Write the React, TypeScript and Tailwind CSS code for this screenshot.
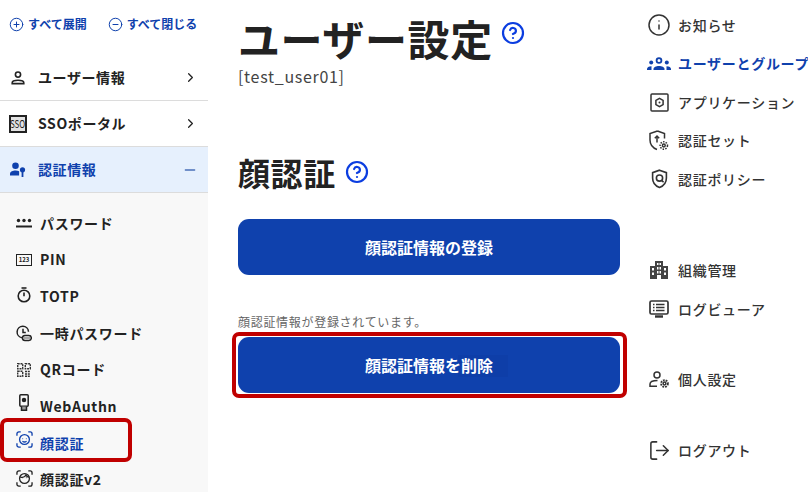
import React from 'react';
import { ChevronRight, CirclePlus, CircleMinus, CircleHelp, Info, LogOut, Minus } from 'lucide-react';

const font = { fontFamily: '"Noto Sans CJK JP", "Noto Sans", sans-serif' };

const PersonIcon = () => (
    <svg width="14" height="14" viewBox="0 0 14 14" fill="none" stroke="#222" strokeWidth="1.6">
        <circle cx="7" cy="3.6" r="2.6" />
        <path d="M1.2 12.6v-.9c0-1.4 2.9-2.4 5.8-2.4s5.8 1 5.8 2.4v.9z" />
    </svg>
);

const SsoIcon = () => (
    <div className="flex h-[18px] w-[18px] items-center justify-center overflow-hidden border-2 border-[#222] bg-[#e2e2e2]">
        <span className="scale-x-[0.72] text-[11px] leading-none text-[#222]">SSO</span>
    </div>
);

const KeyUserIcon = () => (
    <svg width="16" height="15" viewBox="0 0 16 15" fill="#0f41ad">
        <circle cx="5.5" cy="3.8" r="3.3" />
        <path d="M0 13.5v-1.9C0 9.6 3 8.4 5.5 8.4c1.3 0 2.6.3 3.6.9v4.2z" />
        <circle cx="12.5" cy="7.8" r="2.6" />
        <rect x="11.6" y="9" width="1.8" height="6" />
    </svg>
);

const DotsIcon = () => (
    <svg width="16" height="11" viewBox="0 0 16 11" fill="#222">
        <circle cx="2.5" cy="2.5" r="1.7" />
        <circle cx="8" cy="2.5" r="1.7" />
        <circle cx="13.5" cy="2.5" r="1.7" />
        <rect x="0" y="7.5" width="16" height="2" />
    </svg>
);

const PinIcon = () => (
    <div className="flex h-[12px] w-[16px] items-center justify-center border-[1.5px] border-[#222] text-[6px] font-bold leading-none text-[#222]">
        123
    </div>
);

const TimerIcon = () => (
    <svg width="14" height="16" viewBox="0 0 14 16" fill="none" stroke="#222" strokeWidth="1.6">
        <path d="M4.5 1h5" />
        <circle cx="7" cy="9" r="5.8" />
        <path d="M7 5.5v3.8" />
    </svg>
);

const TempIcon = () => (
    <svg width="16" height="17" viewBox="0 0 16 17" fill="none" stroke="#222" strokeWidth="1.5">
        <path d="M6 12.7a5.7 5.7 0 1 1 6.5-6" />
        <path d="M7 3.8v3.7h2.8" />
        <rect x="6.5" y="10.5" width="8.8" height="5" rx="2.5" />
        <path d="M8.5 13h5" strokeDasharray="1 1" />
    </svg>
);

const QrIcon = () => (
    <svg width="14" height="14" viewBox="0 0 14 14" fill="none" stroke="#333" strokeWidth="1.4" strokeDasharray="2 .8">
        <rect x=".7" y=".7" width="5" height="5" />
        <rect x="8.3" y=".7" width="5" height="5" />
        <rect x=".7" y="8.3" width="5" height="5" />
        <path d="M8 8.5h5.5M8 11h5.5M8 13.300h5.5" />
    </svg>
);

const UsbIcon = () => (
    <svg width="10" height="17" viewBox="0 0 10 17" fill="none" stroke="#222" strokeWidth="1.5">
        <rect x=".8" y=".8" width="8.4" height="11.5" rx="1" />
        <circle cx="5" cy="6" r="1.5" fill="#222" />
        <path d="M2.5 12.5v3.7h5v-3.7" fill="#999" />
    </svg>
);

const FaceIcon = ({ color, v2 }: { color: string; v2?: boolean }) => (
    <svg width="17" height="17" viewBox="0 0 18 18" fill="none" stroke={color} strokeWidth="1.4">
        <path d="M1 5V3a2 2 0 0 1 2-2h2M13 1h2a2 2 0 0 1 2 2v2M17 13v2a2 2 0 0 1-2 2h-2M5 17H3a2 2 0 0 1-2-2v-2" />
        <circle cx="9" cy="9" r="5.2" />
        {v2 ? (
            <path d="M4.500 7.5c2 .5 5 0 6-2.200 .6 1.500 1.500 2.200 3 2.400" />
        ) : (
            <path d="M6.800 10.800c1.200.9 3.200.9 4.400 0" />
        )}
        <path d="M6.900 8h.6M10.500 8h.6" />
    </svg>
);

const ParentRow = ({ icon, label, active }: { icon: React.ReactNode; label: string; active?: boolean }) => (
    <div
        className={`flex h-[46px] shrink-0 items-center border-b-[1.5px] border-[#dcdcdc] pr-[10px] ${
            active ? 'bg-[#e6f0fd] text-[#0f41ad]' : 'text-[#222]'
        }`}
    >
        <div className="mr-[2px] flex w-[36px] shrink-0 justify-center">{icon}</div>
        <span className="flex-1 text-[14px] font-bold tracking-[0.6px]">{label}</span>
        {active ? (
            <Minus size={16} strokeWidth={2} color="#4a6fb8" />
        ) : (
            <ChevronRight size={15} strokeWidth={2} color="#222" />
        )}
    </div>
);

const subItems: { icon: React.ReactNode; label: string; active?: boolean; lift?: string }[] = [
    { icon: <DotsIcon />, label: 'パスワード' },
    { icon: <PinIcon />, label: 'PIN' },
    { icon: <TimerIcon />, label: 'TOTP', lift: 'mt-[-2px]' },
    { icon: <TempIcon />, label: '一時パスワード' },
    { icon: <QrIcon />, label: 'QRコード' },
    { icon: <UsbIcon />, label: 'WebAuthn', lift: 'mt-[-8px]' },
    { icon: <FaceIcon color="#0f41ad" />, label: '顔認証', active: true, lift: 'mt-[-7px]' },
    { icon: <FaceIcon color="#222" v2 />, label: '顔認証v2', lift: 'mt-[-2px]' },
];

const HelpIcon = ({ size }: { size: number }) => <CircleHelp size={size} strokeWidth={2.2} color="#0b3de0" />;

const AppIcon = () => (
    <svg width="19" height="19" viewBox="0 0 19 19" fill="none" stroke="#333" strokeWidth="1.5">
        <rect x="1" y="1" width="17" height="17" rx="1" />
        <path d="M9.500 5.300l3.600 2.100v4.200l-3.600 2.100-3.600-2.100V7.400z" />
        <circle cx="9.500" cy="9.500" r="1" fill="#333" stroke="none" />
    </svg>
);

const UsersIcon = () => (
    <svg width="24" height="14" viewBox="0 0 24 14" fill="#0f41ad">
        <circle cx="12" cy="3.5" r="2.4" fill="none" stroke="#0f41ad" strokeWidth="1.8" />
        <path d="M6.5 13v-1c0-2 2.700-3 5.500-3s5.500 1 5.500 3v1z" />
        <circle cx="4.200" cy="5.5" r="2" />
        <path d="M0 13v-1c0-1.700 1.600-2.800 4.500-2.800V13z" />
        <circle cx="19.800" cy="5.5" r="2" />
        <path d="M24 13v-1c0-1.700-1.600-2.800-4.500-2.800V13z" />
    </svg>
);

const ShieldGearIcon = () => (
    <svg width="20" height="21" viewBox="0 0 20 21" fill="none" stroke="#333" strokeWidth="1.5">
        <path d="M8.500 1l7 2.600v5M8 19.500C4 18 1 14.500 1 10V3.600L8.500 1" />
        <path d="M8 12.500V6" />
        <path d="M5.800 8.300L8 6.100l2.200 2.200" />
        <circle cx="14.800" cy="15.5" r="1.4" />
        <circle cx="14.800" cy="15.5" r="3.7" strokeDasharray="1.5 1.2" />
    </svg>
);

const ShieldSearchIcon = () => (
    <svg width="17" height="20" viewBox="0 0 18 21" fill="none" stroke="#333" strokeWidth="1.7">
        <path d="M9 1.200l7.300 2.600v5.700c0 4.800-3 8.500-7.300 10-4.300-1.500-7.300-5.200-7.300-10V3.800z" />
        <circle cx="9" cy="9.5" r="3.3" />
        <path d="M11.300 12l2 2" />
    </svg>
);

const BuildingIcon = () => (
    <svg width="18" height="18" viewBox="0 0 18 18" fill="#444">
        <path
            d="M5 0h8v5h5v13h-7v-4H7v4H0V5h5zM7 2v2h1.500V2zm2.500 0v2H11V2zM7 6v2.500h1.500V6zm2.500 0v2.500H11V6zM2 7v2.500h2V7zm12 0v2.500h2V7zM7 10v2.500h1.500V10zm2.500 0v2.500H11V10zM2 11.500V14h2v-2.500zm12 0V14h2v-2.500z"
            fillRule="evenodd"
        />
    </svg>
);

const LogViewIcon = () => (
    <svg width="20" height="18" viewBox="0 0 20 18" fill="none" stroke="#333" strokeWidth="1.7">
        <rect x="1" y="1" width="18" height="13" rx="1.5" />
        <path d="M7 4.500h8.500M7 7.500h8.500M7 10.500h8.500M4 4.500h1.500M4 7.500h1.500M4 10.500h1.500" />
        <path d="M6 16.500h8" strokeWidth="2.4" />
    </svg>
);

const UserGearIcon = () => (
    <svg width="20" height="17" viewBox="0 0 20 17" fill="none" stroke="#333" strokeWidth="1.5">
        <circle cx="8" cy="4" r="3" />
        <path d="M8.500 9.500c-4 0-7.500 1-7.500 3.500v2.300h7" />
        <circle cx="15.5" cy="12.5" r="1.4" />
        <circle cx="15.5" cy="12.5" r="3.4" strokeDasharray="1.8 1" strokeWidth="1.8" />
    </svg>
);

const NavRow = ({
    icon,
    label,
    active,
    className = '',
}: {
    icon: React.ReactNode;
    label: string;
    active?: boolean;
    className?: string;
}) => (
    <div className={`flex h-[24px] shrink-0 items-center ${className}`}>
        <div className="flex w-[38px] shrink-0 justify-center">{icon}</div>
        <span
            className={`whitespace-nowrap text-[14px] tracking-[0.7px] ${
                active ? 'font-bold text-[#0f41ad]' : 'font-medium text-[#333]'
            }`}
        >
            {label}
        </span>
    </div>
);

export default function App() {
    return (
        <div className="flex h-[492px] w-[808px] overflow-hidden bg-white" style={font}>
            {/* Left menu */}
            <aside className="relative flex w-[208px] shrink-0 flex-col">
                <div className="flex h-[55px] shrink-0 items-start gap-[21px] pl-[9px] pt-[15px] text-[12px] font-bold text-[#0f41ad]">
                    <span className="flex items-center gap-[4px]">
                        <CirclePlus size={15} strokeWidth={1.6} />
                        すべて展開
                    </span>
                    <span className="flex items-center gap-[4px]">
                        <CircleMinus size={15} strokeWidth={1.6} />
                        すべて閉じる
                    </span>
                </div>
                <ParentRow icon={<PersonIcon />} label="ユーザー情報" />
                <ParentRow icon={<SsoIcon />} label="SSOポータル" />
                <ParentRow icon={<KeyUserIcon />} label="認証情報" active />
                <div className="flex flex-1 flex-col gap-[0.65px] bg-[#f8f8f8] pt-[12.2px]">
                    {subItems.map((item) => (
                        <div key={item.label} className="flex h-[36px] shrink-0 items-center">
                            <div className={`flex w-[40px] shrink-0 justify-center pl-[10px] pr-[2px] ${item.lift ?? ''}`}>
                                {item.icon}
                            </div>
                            <span
                                className={`text-[14px] font-bold tracking-[0.7px] ${
                                    item.active ? 'text-[#0f41ad]' : 'text-[#222]'
                                }`}
                            >
                                {item.label}
                            </span>
                        </div>
                    ))}
                </div>
                {/* red annotation */}
                <div className="absolute left-0 top-[418px] h-[44px] w-[132px] rounded-[7px] border-[4px] border-[#c00000]" />
            </aside>

            {/* Main */}
            <main className="relative flex w-[432px] shrink-0 flex-col pl-[30px] pr-[20px]">
                <div className="mt-[10px] flex items-center gap-[8px]">
                    <h1 className="text-[42px] font-bold leading-[56px] tracking-[0.6px] text-[#222]">ユーザー設定</h1>
                    <div className="mb-[10px]">
                        <HelpIcon size={24} />
                    </div>
                </div>
                <p className="text-[16px] leading-[20px] tracking-[0.7px] text-[#444]">[test_user01]</p>
                <div className="mt-[64px] flex items-center gap-[9px]">
                    <h2 className="text-[32px] font-bold leading-[44px] tracking-[0.6px] text-[#222]">顔認証</h2>
                    <HelpIcon size={24} />
                </div>
                <button className="mt-[25px] flex h-[56px] w-full shrink-0 items-center justify-center rounded-[11px] bg-[#0f41ad] text-[16px] font-bold text-white">
                    顔認証情報の登録
                </button>
                <p className="mt-[39px] text-[12px] leading-[16px] tracking-[0.7px] text-[#666]">顔認証情報が登録されています。</p>
                <button className="relative mt-[7px] flex h-[56px] w-full shrink-0 items-center justify-center rounded-[11px] bg-[#0f41ad] text-[16px] font-bold text-white">
                    <span className="absolute left-[220px] top-[18px] h-[22px] w-[50px] bg-[#0a2a80]/10" />
                    <span className="relative">顔認証情報を削除</span>
                </button>
                {/* red annotation */}
                <div className="absolute left-[24px] top-[332px] h-[66px] w-[395px] rounded-[7px] border-[4px] border-[#c00000]" />
            </main>

            {/* Right nav */}
            <nav className="flex flex-1 flex-col pt-[13px]">
                <NavRow icon={<Info size={24} strokeWidth={1.5} color="#333" />} label="お知らせ" />
                <NavRow className="mt-[14.5px]" icon={<UsersIcon />} label="ユーザーとグループ" active />
                <NavRow className="mt-[14.5px]" icon={<AppIcon />} label="アプリケーション" />
                <NavRow className="mt-[14.5px]" icon={<ShieldGearIcon />} label="認証セット" />
                <NavRow className="mt-[14.5px]" icon={<ShieldSearchIcon />} label="認証ポリシー" />
                <NavRow className="mt-[67px]" icon={<BuildingIcon />} label="組織管理" />
                <NavRow className="mt-[15px]" icon={<LogViewIcon />} label="ログビューア" />
                <NavRow className="mt-[46px]" icon={<UserGearIcon />} label="個人設定" />
                <NavRow className="mt-[47px]" icon={<LogOut size={23} strokeWidth={1.6} color="#333" />} label="ログアウト" />
            </nav>
        </div>
    );
}
